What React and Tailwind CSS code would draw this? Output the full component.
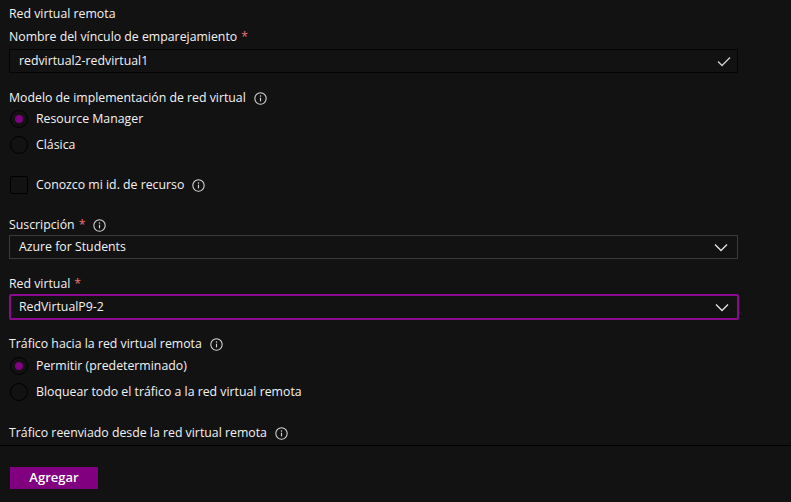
import React, { useState } from "react";

const InfoIcon = () => (
  <svg width="13" height="13" viewBox="0 0 16 16" className="ml-2 shrink-0">
    <circle cx="8" cy="8" r="7" fill="none" stroke="#d6d6d6" strokeWidth="1.3" />
    <rect x="7.3" y="7" width="1.4" height="4.5" fill="#d6d6d6" />
    <circle cx="8" cy="4.9" r="0.9" fill="#d6d6d6" />
  </svg>
);

const Chevron = () => (
  <svg width="14" height="9" viewBox="0 0 14 9" className="shrink-0">
    <path d="M1 1.5 L7 7.5 L13 1.5" fill="none" stroke="#e6e6e6" strokeWidth="1.3" />
  </svg>
);

const Check = () => (
  <svg width="14" height="11" viewBox="0 0 14 11" className="shrink-0">
    <path d="M1 5.5 L5 9.5 L13 1.5" fill="none" stroke="#d0d0d0" strokeWidth="1.3" />
  </svg>
);

const Label = ({ children, required, info }) => (
  <div className="flex items-center h-5 text-[12.3px] text-[#f2f2f2]">
    <span>{children}</span>
    {required && <span className="ml-1 text-[#f1707b]">*</span>}
    {info && <InfoIcon />}
  </div>
);

const Radio = ({ label, checked, onClick }) => (
  <div className="flex items-center h-[26px] cursor-pointer" onClick={onClick}>
    <div className="w-[18px] h-[18px] ml-[1px] rounded-full border border-black flex items-center justify-center">
      {checked && <div className="w-2 h-2 rounded-full bg-[#800080]" />}
    </div>
    <span className="ml-[8px] text-[12.3px] text-[#f2f2f2]">{label}</span>
  </div>
);

export default function App() {
  const [modelo, setModelo] = useState("rm");
  const [trafico, setTrafico] = useState("permitir");
  const [conozco, setConozco] = useState(false);

  return (
    <div className="w-[791px] h-[502px] bg-[#121212] flex flex-col overflow-hidden" style={{ fontFamily: '"Open Sans", "Noto Sans", sans-serif' }}>
      <div className="flex-1 px-[9px] pt-1 overflow-hidden">
        <div className="text-[12.3px] text-[#f2f2f2] h-5 flex items-center">Red virtual remota</div>
        <div className="mt-[3px]"><Label required>Nombre del vínculo de emparejamiento</Label></div>
        <div className="mt-[2px] w-[729px] h-[24px] border border-[#050505] flex items-center justify-between pl-[9px] pr-[6px] text-[12.3px] text-[#f2f2f2]">
          <span>redvirtual2-redvirtual1</span>
          <Check />
        </div>

        <div className="mt-[15px]"><Label info>Modelo de implementación de red virtual</Label></div>
        <div className="-mt-[2px]">
          <Radio label="Resource Manager" checked={modelo === "rm"} onClick={() => setModelo("rm")} />
          <Radio label="Clásica" checked={modelo === "cl"} onClick={() => setModelo("cl")} />
        </div>

        <div className="mt-[17px] flex items-center h-5 cursor-pointer" onClick={() => setConozco(!conozco)}>
          <div className="w-[18px] h-[18px] ml-[1px] rounded-[2px] border border-black" />
          <span className="ml-[8px] text-[12.3px] text-[#f2f2f2]">Conozco mi id. de recurso</span>
          <InfoIcon />
        </div>

        <div className="mt-[20px]"><Label required info>Suscripción</Label></div>
        <div className="w-[729px] h-[24px] border border-[#3b3b3b] flex items-center justify-between pl-[9px] pr-[9px] text-[12.3px] text-[#f2f2f2]">
          <span>Azure for Students</span>
          <Chevron />
        </div>

        <div className="mt-[15px]"><Label required>Red virtual</Label></div>
        <div className="w-[730px] h-[26px] border-2 border-[#8b0a8f] rounded-[2px] flex items-center justify-between pl-[8px] pr-[8px] text-[12.3px] text-[#f2f2f2]">
          <span>RedVirtualP9-2</span>
          <Chevron />
        </div>

        <div className="mt-[14px]"><Label info>Tráfico hacia la red virtual remota</Label></div>
        <div className="-mt-[1px]">
          <Radio label="Permitir (predeterminado)" checked={trafico === "permitir"} onClick={() => setTrafico("permitir")} />
          <Radio label="Bloquear todo el tráfico a la red virtual remota" checked={trafico === "bloquear"} onClick={() => setTrafico("bloquear")} />
        </div>

        <div className="mt-[18px]"><Label info>Tráfico reenviado desde la red virtual remota</Label></div>
      </div>
      <div className="h-[57px] border-t border-black px-[10px] pt-[21px] shrink-0 flex items-start">
        <button className="w-[88px] h-[22px] bg-[#800080] text-white text-[13px] font-semibold">Agregar</button>
      </div>
    </div>
  );
}
